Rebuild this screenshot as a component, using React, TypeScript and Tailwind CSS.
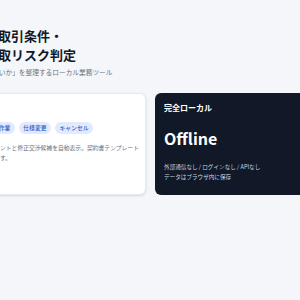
const tags = ["無償追加作業", "仕様変更", "キャンセル"];

const Tag = ({ label }: { label: string }) => (
  <span className="rounded-full bg-[#e2eafc] px-[4.5px] text-[5.8px] leading-[12px] font-medium text-[#2f5fd0]">
    {label}
  </span>
);

export default function App() {
  return (
    <div className="h-[300px] w-[300px] overflow-hidden bg-[#f4f6fa] font-['Noto_Sans_CJK_JP','Noto_Sans',sans-serif]">
      <div className="ml-[-41px] w-[380px] pt-[25.5px]">
        <h1 className="text-[13px] leading-[19px] font-bold text-[#111827]">
          下請け取引条件・
          <br />
          不当搾取リスク判定
        </h1>
        <p className="mt-[3.5px] text-[6.7px] leading-[10px] text-[#6b7280]">
          「受けてもよいか」を整理するローカル業務ツール
        </p>

        <div className="mt-[16px] grid grid-cols-[187px_1fr] gap-[9px]">
          <section className="min-h-[102px] rounded-[6px] border border-[#e6e9ef] bg-white pl-[11px] pr-[8px] pt-[9px] shadow-sm">
            <h2 className="text-[8px] leading-[12px] font-bold text-[#111827]">論点</h2>
            <div className="mt-[7px] flex gap-[4px]">
              {tags.map((t) => (
                <Tag key={t} label={t} />
              ))}
            </div>
            <p className="mt-[8.6px] whitespace-nowrap text-[5.8px] leading-[10.7px] text-[#6b7280]">
              リスクポイントと修正交渉候補を自動表示。契約書テンプレート
              <br />
              も生成します。
            </p>
          </section>

          <section className="min-h-[102px] rounded-[6px] bg-[#111827] pl-[9px] pt-[9px] text-white">
            <h2 className="text-[8px] leading-[12px] font-bold">完全ローカル</h2>
            <div className="mt-[15px] text-[16px] leading-[19px] font-bold">Offline</div>
            <p className="mt-[14px] text-[5.6px] leading-[10px] text-slate-300">
              外部通信なし / ログインなし / APIなし
              <br />
              データはブラウザ内に保存
            </p>
          </section>
        </div>
      </div>
    </div>
  );
}
